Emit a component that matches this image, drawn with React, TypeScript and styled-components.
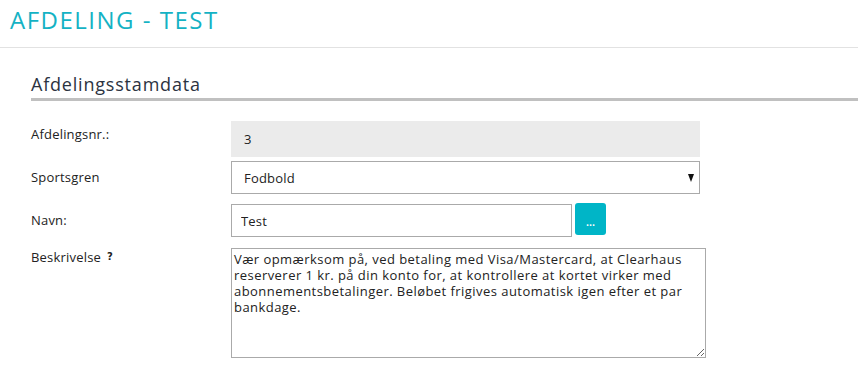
import React from "react";
import styled, { createGlobalStyle } from "styled-components";

const Global = createGlobalStyle`
  html, body { margin: 0; padding: 0; background: #fff; }
  body { font-family: "Open Sans", "Liberation Sans", sans-serif; color: #222; }
  * { box-sizing: border-box; }
`;

const Header = styled.header`
  height: 48px;
  border-bottom: 1px solid #e2e2e2;
  padding: 5px 0 0 10px;
`;

const Title = styled.h1`
  margin: 0;
  font-size: 24px;
  line-height: 30px;
  font-weight: 500;
  letter-spacing: 1.5px;
  color: #14b2c4;
`;

const Section = styled.section`
  padding: 24px 0 0 31px;
`;

const SectionTitle = styled.h2`
  margin: 0;
  font-size: 18px;
  line-height: 24px;
  font-weight: 500;
  letter-spacing: 0.8px;
  color: #2b3341;
  padding-bottom: 2px;
  border-bottom: 3px solid #c0c0c0;
`;

const Form = styled.div`
  display: flex;
  flex-direction: column;
  padding-top: 20px;
`;

const Row = styled.div<{ $gap: number }>`
  display: flex;
  align-items: flex-start;
  margin-bottom: ${(p) => p.$gap}px;
`;

const Label = styled.label<{ $top: number }>`
  width: 200px;
  flex: none;
  font-size: 13px;
  line-height: 18px;
  letter-spacing: 0.2px;
  color: #222;
  padding-top: ${(p) => p.$top}px;
  display: flex;
  align-items: center;
  gap: 6px;
`;

const Help = styled.span`
  font-family: "DejaVu Sans", sans-serif;
  font-weight: 700;
  font-size: 10px;
  color: #222;
`;

const ReadOnly = styled.div`
  width: 469px;
  height: 36px;
  background: #ebebeb;
  font-size: 13px;
  line-height: 36px;
  padding-left: 13px;
  color: #222;
`;

const SelectWrap = styled.div`
  position: relative;
  width: 469px;
`;

const Select = styled.select`
  display: block;
  appearance: none;
  -webkit-appearance: none;
  width: 100%;
  height: 33px;
  border: 1px solid #aaa;
  border-radius: 0;
  background: #fff;
  font-family: inherit;
  font-size: 13px;
  letter-spacing: 0.2px;
  color: #222;
  padding: 0 0 0 12px;
  outline: none;
`;

const Arrow = styled.span`
  position: absolute;
  right: 6px;
  top: 13px;
  width: 0;
  height: 0;
  border-left: 3.5px solid transparent;
  border-right: 3.5px solid transparent;
  border-top: 8px solid #111;
  pointer-events: none;
`;

const InputGroup = styled.div`
  display: flex;
  align-items: flex-start;
  gap: 3px;
`;

const TextInput = styled.input`
  display: block;
  width: 341px;
  height: 33px;
  border: 1px solid #aaa;
  border-radius: 0;
  font-family: inherit;
  font-size: 13px;
  letter-spacing: 0.2px;
  color: #222;
  padding: 0 9px;
  margin-top: 1px;
  outline: none;
`;

const DotsButton = styled.button`
  display: block;
  width: 31px;
  height: 32px;
  border: none;
  border-radius: 3px;
  background: #00b5c7;
  color: #fff;
  font-family: "DejaVu Sans", sans-serif;
  font-size: 8px;
  font-weight: 700;
  padding: 10px 0 0;
  line-height: 1;
  cursor: pointer;
`;

const TextArea = styled.textarea`
  display: block;
  width: 475px;
  height: 110px;
  border: 1px solid #aaa;
  border-radius: 0;
  font-family: inherit;
  font-size: 13px;
  line-height: 16px;
  letter-spacing: 0.45px;
  color: #222;
  padding: 2px 2px;
  resize: both;
  outline: none;
`;

const description =
  "Vær opmærksom på, ved betaling med Visa/Mastercard, at Clearhaus\nreserverer 1 kr. på din konto for, at kontrollere at kortet virker med\nabonnementsbetalinger. Beløbet frigives automatisk igen efter et par\nbankdage.";

export default function App() {
  return (
    <>
      <Global />
      <Header>
        <Title>AFDELING - TEST</Title>
      </Header>
      <Section>
        <SectionTitle>Afdelingsstamdata</SectionTitle>
        <Form>
          <Row $gap={4}>
            <Label $top={4}>Afdelingsnr.:</Label>
            <ReadOnly>3</ReadOnly>
          </Row>
          <Row $gap={9}>
            <Label $top={7}>Sportsgren</Label>
            <SelectWrap>
              <Select defaultValue="Fodbold">
                <option>Fodbold</option>
                <option>Håndbold</option>
              </Select>
              <Arrow />
            </SelectWrap>
          </Row>
          <Row $gap={11}>
            <Label $top={8}>Navn:</Label>
            <InputGroup>
              <TextInput defaultValue="Test" />
              <DotsButton>...</DotsButton>
            </InputGroup>
          </Row>
          <Row $gap={0}>
            <Label $top={0}>
              Beskrivelse <Help>?</Help>
            </Label>
            <TextArea defaultValue={description} />
          </Row>
        </Form>
      </Section>
    </>
  );
}
